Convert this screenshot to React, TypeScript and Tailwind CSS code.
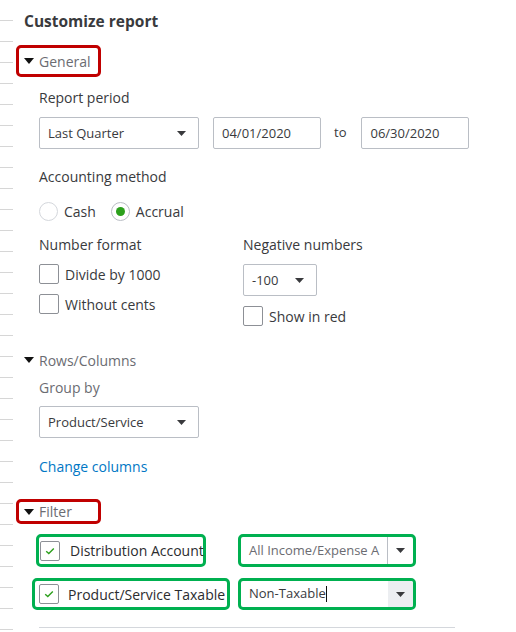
import React from 'react'

const Caret = ({ className = '' }: { className?: string }) => (
  <svg width="9" height="5" viewBox="0 0 9 5" className={className}>
    <path d="M0 0 L9 0 L4.5 5 Z" fill="#393a3d" />
  </svg>
)

const SectionCaret = () => (
  <svg width="10" height="6" viewBox="0 0 10 6" className="shrink-0">
    <path d="M0 0 L10 0 L5 6 Z" fill="#111" />
  </svg>
)

const Check = () => (
  <svg width="10" height="8" viewBox="0 0 10 8">
    <path d="M1.2 4.2 L3.8 6.6 L8.8 1.4" fill="none" stroke="#2ca01c" strokeWidth="1.4" />
  </svg>
)

const Checkbox = ({ checked = false }: { checked?: boolean }) => (
  <div className="w-[20px] h-[20px] shrink-0 rounded-[2px] border border-[#8d9096] bg-white flex items-center justify-center">
    {checked && <Check />}
  </div>
)

const Radio = ({ checked = false }: { checked?: boolean }) => (
  <div
    className={`w-[19px] h-[19px] shrink-0 rounded-full border bg-white flex items-center justify-center ${
      checked ? 'border-[#babec5]' : 'border-[#d4d7dc]'
    }`}
  >
    {checked && <div className="w-[9px] h-[9px] rounded-full bg-[#2ca01c]" />}
  </div>
)

const Select = ({ value, width }: { value: string; width: string }) => (
  <div className={`${width} h-[32px] shrink-0 border border-[#babec5] rounded-[2px] bg-white flex items-center justify-between pl-[8px] pr-[12px]`}>
    <span className="text-[13px] text-[#393a3d] leading-none">{value}</span>
    <Caret />
  </div>
)

const DateInput = ({ value }: { value: string }) => (
  <div className="w-[108px] h-[32px] shrink-0 border border-[#babec5] rounded-[2px] bg-white flex items-center pl-[8px]">
    <span className="text-[13px] text-[#393a3d] leading-none">{value}</span>
  </div>
)

export default function App() {
  return (
    <div
      className="w-[516px] h-[632px] overflow-hidden bg-white bg-no-repeat bg-[length:13px_100%] bg-[image:repeating-linear-gradient(to_bottom,transparent_0px,transparent_20px,#d6d6d6_20px,#d6d6d6_21px)] flex flex-col"
      style={{ fontFamily: '"Open Sans", "Liberation Sans", sans-serif' }}
    >
      {/* Title */}
      <div className="ml-[24px] mt-[12px] h-[20px] flex items-center text-[15.5px] font-bold text-[#393a3d]">
        Customize report
      </div>

      {/* General */}
      <div className="ml-[16px] mt-[13px] w-[85px] h-[32px] border-[3px] border-[#c00000] rounded-[5px] flex items-center pl-[5px] gap-[5px]">
        <SectionCaret />
        <span className="text-[14px] text-[#6b6c72]">General</span>
      </div>

      <div className="ml-[39px] mt-[10px] h-[20px] flex items-center text-[14px] text-[#393a3d]">Report period</div>
      <div className="ml-[39px] mt-[10px] flex items-center">
        <Select value="Last Quarter" width="w-[160px]" />
        <div className="ml-[14px]">
          <DateInput value="04/01/2020" />
        </div>
        <span className="ml-[13px] mr-[15px] text-[13px] text-[#393a3d]">to</span>
        <DateInput value="06/30/2020" />
      </div>

      <div className="ml-[39px] mt-[17px] h-[20px] flex items-center text-[14px] text-[#393a3d]">Accounting method</div>
      <div className="ml-[39px] mt-[15px] h-[20px] flex items-center text-[14px] text-[#393a3d]">
        <Radio />
        <span className="ml-[6px]">Cash</span>
        <div className="ml-[15px]">
          <Radio checked />
        </div>
        <span className="ml-[6px]">Accrual</span>
      </div>

      <div className="ml-[39px] mt-[13px] flex items-start text-[14px] text-[#393a3d]">
        <div className="w-[204px] flex flex-col">
          <div className="h-[20px] flex items-center">Number format</div>
          <div className="mt-[10px] h-[20px] flex items-center gap-[6px]">
            <Checkbox />
            <span>Divide by 1000</span>
          </div>
          <div className="mt-[10px] h-[20px] flex items-center gap-[6px]">
            <Checkbox />
            <span>Without cents</span>
          </div>
        </div>
        <div className="flex flex-col">
          <div className="h-[20px] flex items-center">Negative numbers</div>
          <div className="mt-[10px]">
            <Select value="-100" width="w-[74px]" />
          </div>
          <div className="mt-[10px] h-[20px] flex items-center gap-[6px]">
            <Checkbox />
            <span>Show in red</span>
          </div>
        </div>
      </div>

      {/* Rows/Columns */}
      <div className="ml-[24px] mt-[24px] h-[20px] flex items-center gap-[5px]">
        <SectionCaret />
        <span className="text-[14px] text-[#6b6c72]">Rows/Columns</span>
      </div>
      <div className="ml-[39px] mt-[7px] h-[20px] flex items-center text-[14px] text-[#6b6c72]">Group by</div>
      <div className="ml-[39px] mt-[9px]">
        <Select value="Product/Service" width="w-[160px]" />
      </div>
      <div className="ml-[39px] mt-[18px] h-[20px] flex items-center text-[14px] text-[#0077c5]">Change columns</div>

      {/* Filter */}
      <div className="ml-[16px] mt-[23px] w-[85px] h-[25px] border-[3px] border-[#c00000] rounded-[5px] flex items-center pl-[5px] gap-[5px]">
        <SectionCaret />
        <span className="text-[14px] text-[#6b6c72]">Filter</span>
      </div>

      <div className="mt-[10px] flex items-center">
        <div className="ml-[36px] w-[170px] h-[33px] border-[3px] border-[#00b050] rounded-[5px] flex items-center pl-[1px] gap-[10px]">
          <Checkbox checked />
          <span className="text-[14px] font-medium text-[#2b2c2f] whitespace-nowrap">Distribution Account</span>
        </div>
        <div className="ml-[32px] w-[178px] h-[33px] border-[3px] border-[#00b050] rounded-[5px] bg-white flex items-stretch overflow-hidden">
          <div className="flex-1 flex items-center pl-[8px] overflow-hidden">
            <span className="text-[13px] text-[#6b6c72] whitespace-nowrap">All Income/Expense A</span>
          </div>
          <div className="w-[26px] border-l border-[#babec5] flex items-center justify-center">
            <Caret />
          </div>
        </div>
      </div>

      <div className="mt-[11px] flex items-center">
        <div className="ml-[32px] w-[198px] h-[32px] border-[3px] border-[#00b050] rounded-[5px] flex items-center pl-[4px] gap-[9px]">
          <Checkbox checked />
          <span className="text-[14px] font-medium text-[#2b2c2f] whitespace-nowrap">Product/Service Taxable</span>
        </div>
        <div className="ml-[8px] w-[178px] h-[32px] border-[3px] border-[#00b050] rounded-[5px] bg-white flex items-stretch overflow-hidden">
          <div className="flex-1 flex items-center pl-[8px]">
            <span className="text-[13px] text-[#393a3d] whitespace-nowrap">Non-Taxable</span>
            <span className="w-px h-[16px] bg-[#111]" />
          </div>
          <div className="w-[25px] bg-[#eceef1] flex items-center justify-center">
            <Caret />
          </div>
        </div>
      </div>

      <div className="ml-[39px] mt-[17px] w-[416px] h-px bg-[#d4d7dc]" />
    </div>
  )
}
